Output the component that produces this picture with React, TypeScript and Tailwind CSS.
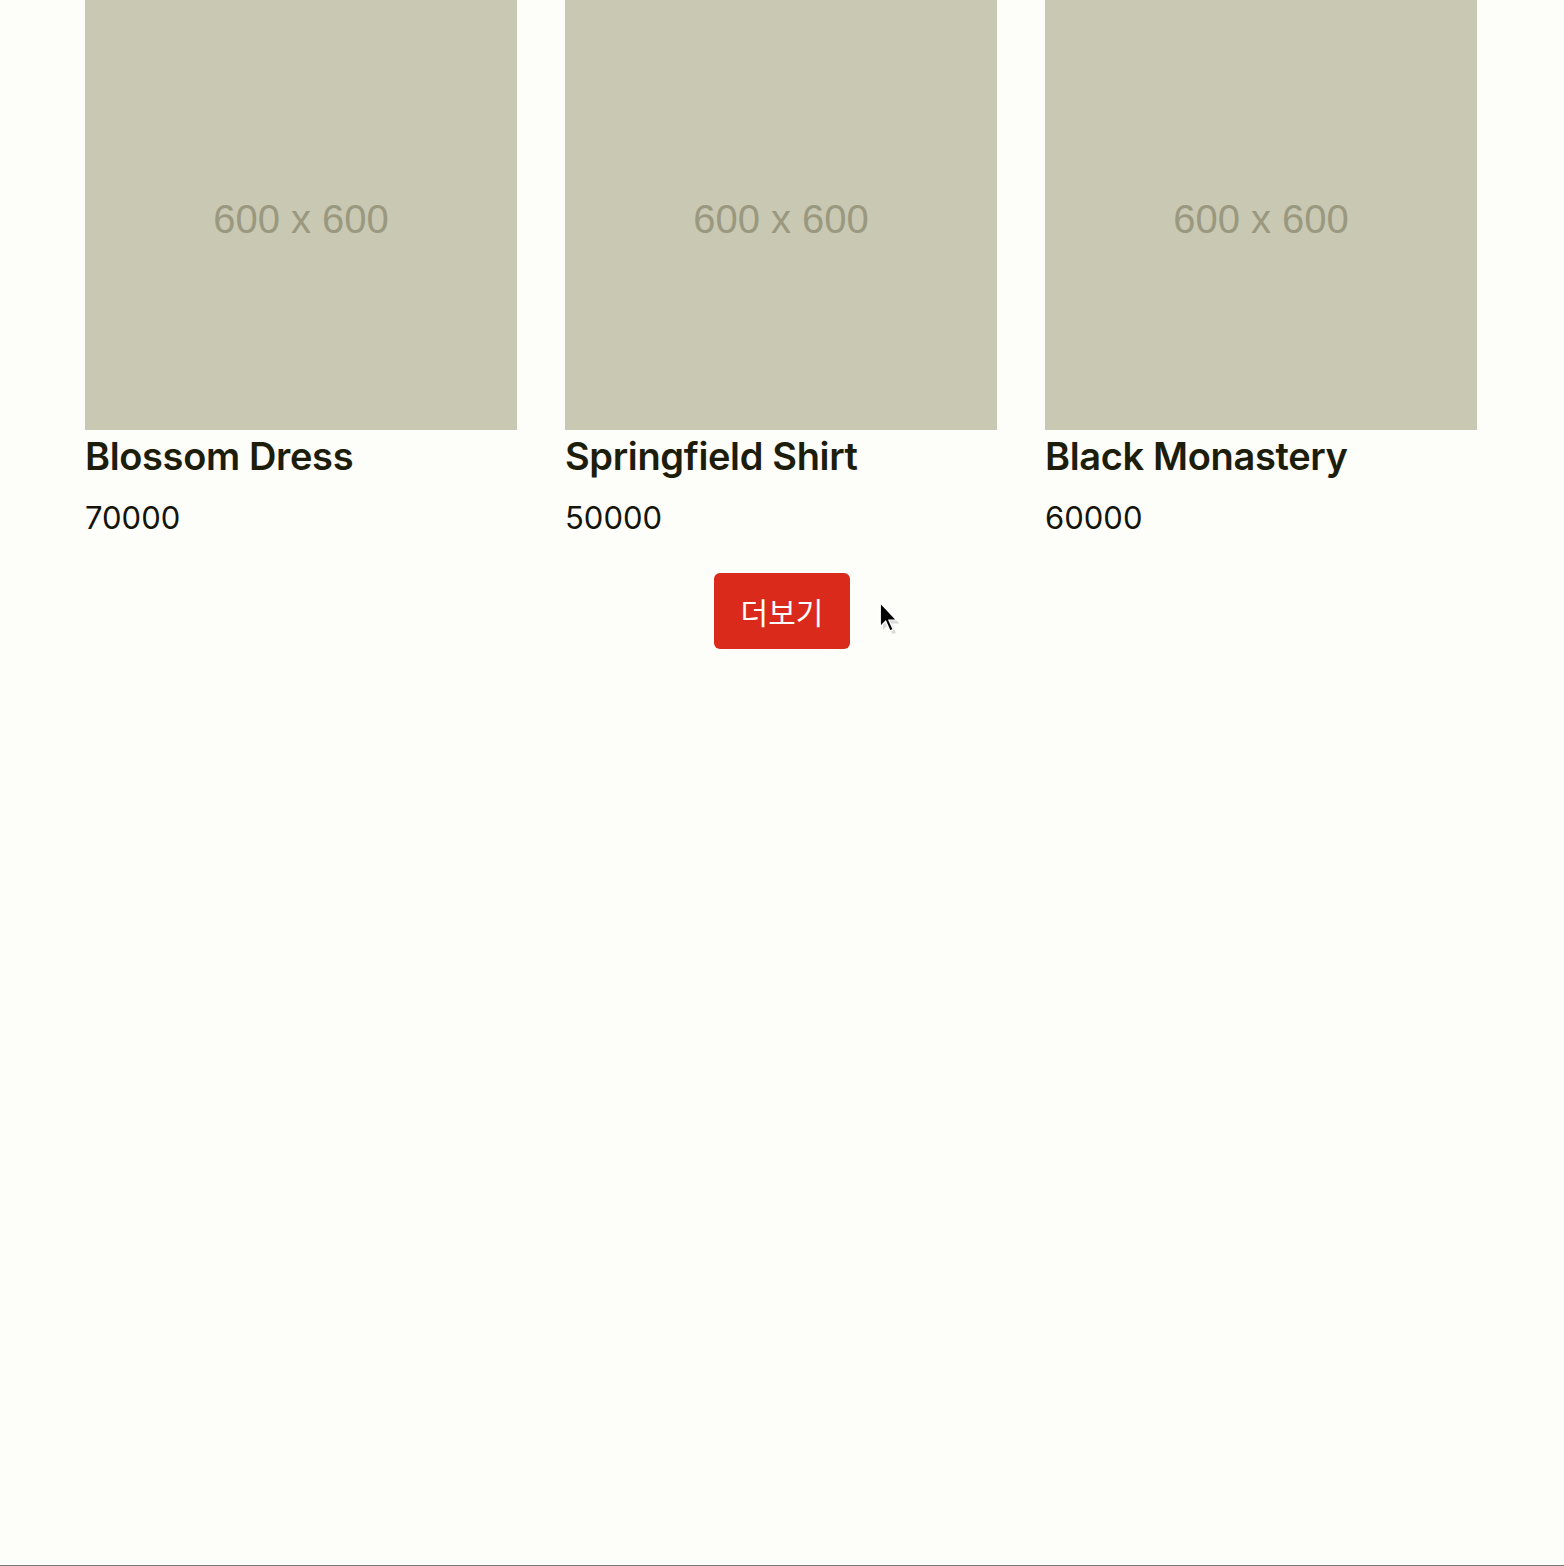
import React from "react";

interface Product {
  id: number;
  name: string;
  price: number;
}

const products: Product[] = [
  { id: 1, name: "Blossom Dress", price: 70000 },
  { id: 2, name: "Springfield Shirt", price: 50000 },
  { id: 3, name: "Black Monastery", price: 60000 },
];

function ProductCard({ product }: { product: Product }) {
  return (
    <div className="w-[432px]">
      <div className="w-full h-[430px] bg-[#c9c8b3] flex items-center justify-center">
        <span className="mt-[8px] text-[40px] text-[#9a9980] font-['Liberation_Sans',sans-serif]">600 x 600</span>
      </div>
      <h2 className="mt-[2px] text-[38px] leading-[48px] font-semibold text-[#1d1d0c] tracking-[-0.35px]">{product.name}</h2>
      <p className="mt-[20px] text-[31px] leading-[36px] text-[#141408]">{product.price}</p>
    </div>
  );
}

export default function App() {
  return (
    <div className="relative min-h-[1566px] bg-[#fdfdfa] border-b border-[#7a7a7a] font-['Inter','Noto_Sans_CJK_KR',sans-serif]">
      <div className="ml-[85px] flex gap-[48px]">
        {products.map((p) => (
          <ProductCard key={p.id} product={p} />
        ))}
      </div>
      <div className="flex justify-center mt-[37px]">
        <button className="bg-[#da2a1b] text-white rounded-md px-[27px] py-[20px] text-[30px] leading-[36px] font-['Noto_Sans_CJK_KR',sans-serif]">
          더보기
        </button>
      </div>
      {/* mouse pointer */}
      <svg className="absolute left-[877px] top-[600px]" width="26" height="36" viewBox="0 0 24 32">
        <path d="M4 3 L4 25 L9 20 L13 29 L16 27.5 L12 19 L19 19 Z" fill="#b8b8b8" opacity="0.5" transform="translate(1.5 2)" />
        <path d="M3 2 L3 24 L8 19 L12 28 L15 26.5 L11 18 L18 18 Z" fill="#000" stroke="#fff" strokeWidth="1.2" />
      </svg>
    </div>
  );
}
